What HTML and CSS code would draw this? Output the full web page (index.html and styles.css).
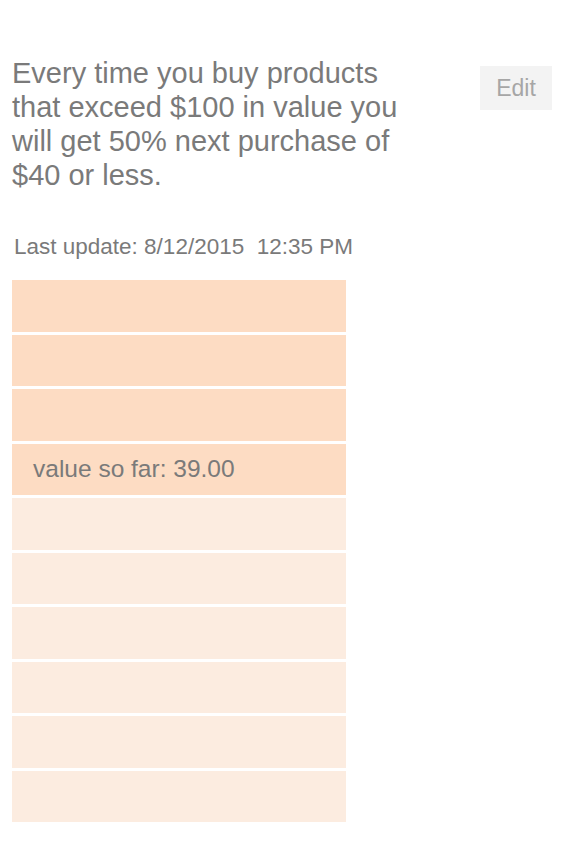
FILE: index.html
```html
<!DOCTYPE html>
<html>
<head>
<meta charset="utf-8">
<link rel="stylesheet" href="styles.css">
</head>
<body>
<div class="page">
  <div class="header">
    <p class="desc">Every time you buy products that exceed $100 in value you will get 50% next purchase of $40 or less.</p>
    <button class="edit">Edit</button>
  </div>
  <div class="updated">Last update: 8/12/2015&nbsp; 12:35 PM</div>
  <div class="bars">
    <div class="bar filled"></div>
    <div class="bar filled"></div>
    <div class="bar filled"></div>
    <div class="bar filled"><span class="label">value so far: 39.00</span></div>
    <div class="bar"></div>
    <div class="bar"></div>
    <div class="bar"></div>
    <div class="bar"></div>
    <div class="bar"></div>
    <div class="bar"></div>
  </div>
</div>
</body>
</html>
```
FILE: styles.css
```css
html, body {
  margin: 0;
  padding: 0;
  background: #ffffff;
}
.page {
  font-family: "Liberation Sans", Arial, sans-serif;
  color: #7a7a7a;
  padding: 56px 24px 0 12px;
}
.header {
  display: flex;
  justify-content: space-between;
  align-items: flex-start;
}
.desc {
  margin: 0;
  width: 400px;
  font-size: 29px;
  line-height: 34px;
}
.edit {
  margin-top: 10px;
  width: 72px;
  height: 44px;
  border: none;
  background: #f3f3f3;
  color: #a6a6a6;
  font-family: "Liberation Sans", Arial, sans-serif;
  font-size: 23px;
  padding: 0;
}
.updated {
  margin-top: 42px;
  padding-left: 2px;
  font-size: 22.5px;
  line-height: 26px;
}
.bars {
  margin-top: 20px;
  width: 334px;
  display: flex;
  flex-direction: column;
  gap: 3px;
}
.bar {
  height: 51.5px;
  background: #fcece0;
  display: flex;
  align-items: center;
}
.bar.filled {
  background: #fddcc3;
}
.label {
  padding-left: 21px;
  font-size: 24.5px;
}
```
